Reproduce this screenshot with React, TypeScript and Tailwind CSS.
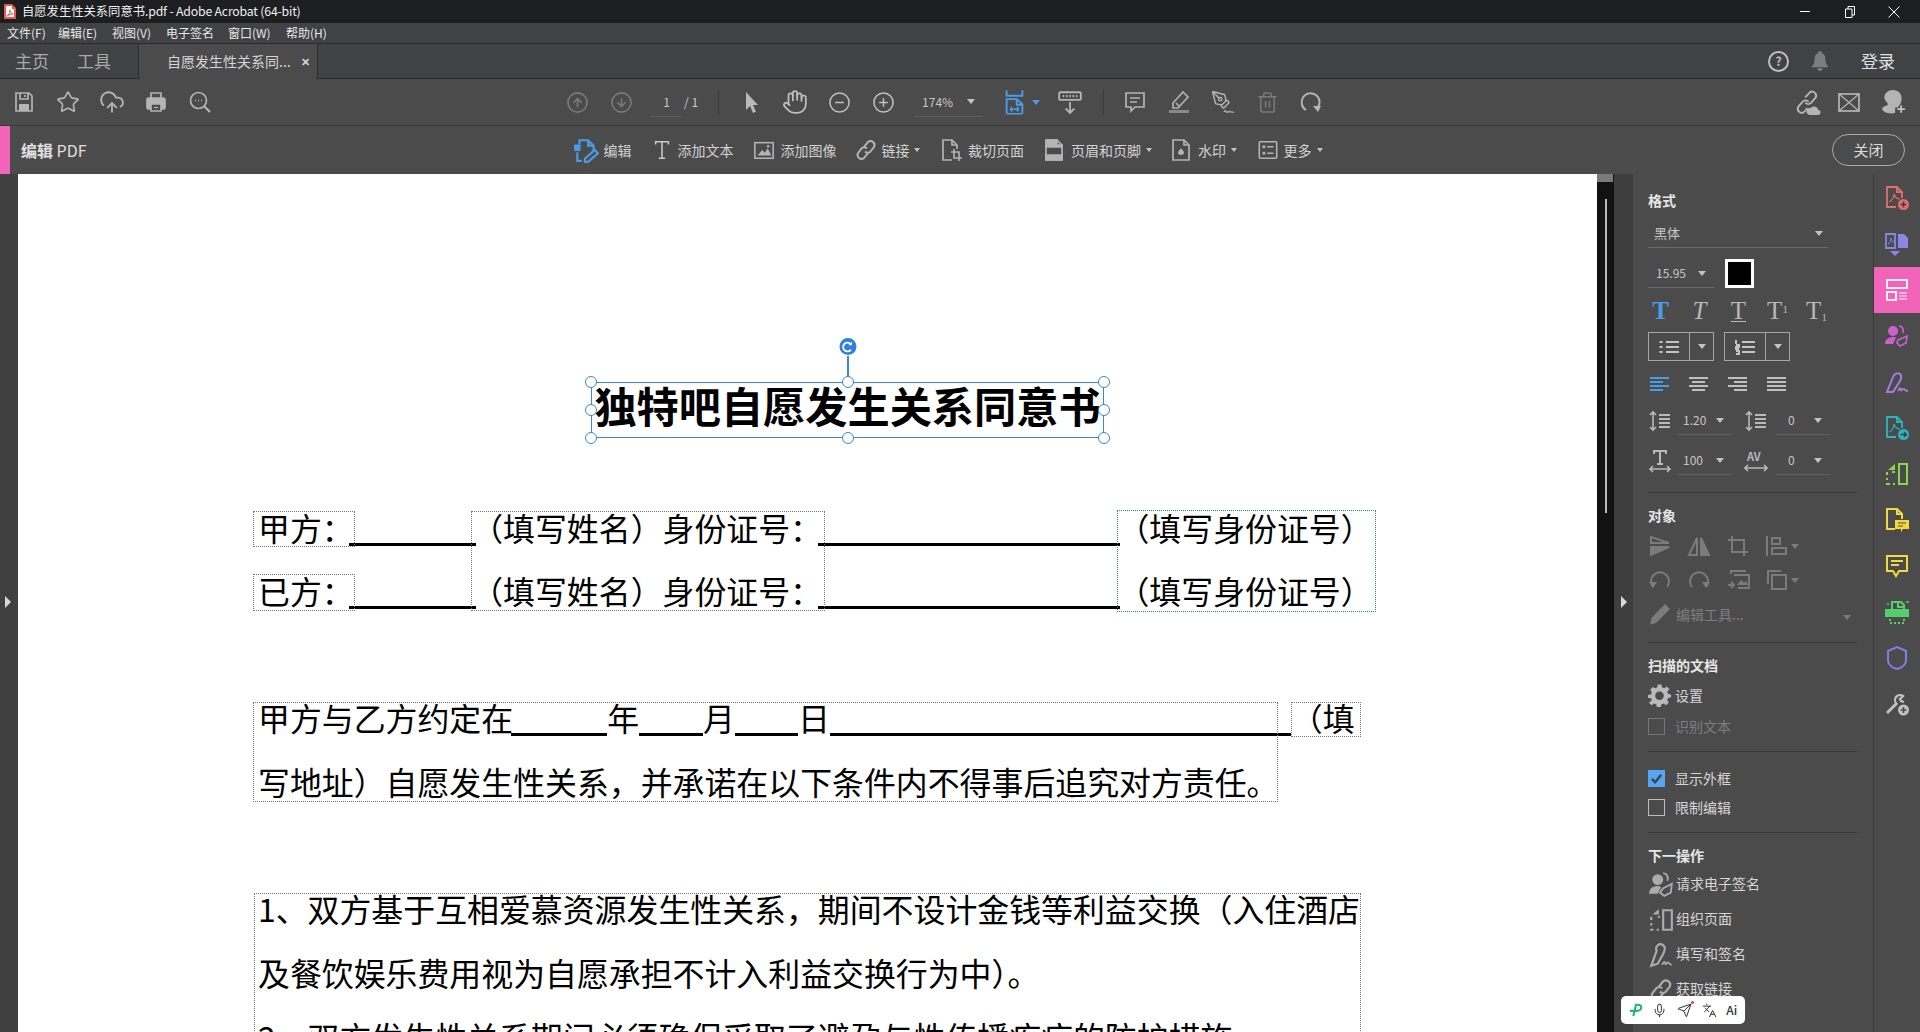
import type { ReactNode } from 'react'
import {
  CircleArrowDown,
  CircleArrowUp,
  CircleMinus,
  CirclePlus,
  CloudUpload,
  Hand,
  Languages,
  Mic,
  PenTool,
  Send,
  Star,
  Trash2,
} from 'lucide-react'

function Svg({
  size = 24,
  className = 'text-[#b4b4b4]',
  sw = 1.7,
  children,
}: {
  size?: number
  className?: string
  sw?: number
  children: ReactNode
}) {
  return (
    <svg viewBox="0 0 24 24" width={size} height={size} fill="none" stroke="currentColor" strokeWidth={sw} className={`shrink-0 ${className}`}>
      {children}
    </svg>
  )
}

function Caret({ className = 'border-t-[#c4c4c4]', big = false }: { className?: string; big?: boolean }) {
  return (
    <span
      className={`inline-block h-0 w-0 border-x-transparent border-b-0 ${big ? 'border-x-[4px] border-t-[5px]' : 'border-x-[3px] border-t-[4px]'} ${className}`}
    />
  )
}

/* toolbar drawings */
const SaveIcon = () => (
  <Svg>
    <path d="M4 3h13l3 3v15H4z" />
    <path d="M8 3v6h8V3M13 5v2" />
    <path d="M7 21v-7h10v7z" fill="currentColor" stroke="none" />
  </Svg>
)
const PrintIcon = () => (
  <Svg>
    <path d="M7 8V3h10v5" />
    <rect x="3" y="8" width="18" height="11" rx="2" fill="currentColor" />
    <path d="M7 14h10v7H7z" fill="#4b4b4b" />
    <path d="M10 17.500h4" strokeWidth={1.2} />
  </Svg>
)
const SearchDots = () => (
  <Svg>
    <circle cx="10.5" cy="10.5" r="8" />
    <path d="M16.5 16.5 22 22" strokeWidth={2.2} />
    <path d="M7 10.5h1M10 10.5h1M13 10.5h1" strokeWidth={1.6} />
  </Svg>
)
const CursorIcon = () => (
  <Svg className="text-[#b9b9b9]">
    <path d="M7 2v18l4-4 3 7 3-1.3-3-6.7h5z" fill="currentColor" stroke="none" />
  </Svg>
)
const FitIcon = () => (
  <Svg size={27} className="text-[#4c9be8]">
    <path d="M5 1v5h14V1" />
    <path d="M5 22V9h9l5 4.5V22" />
    <path d="M14 9v5h5" />
    <path d="M5 22h14M8 18h8M8 18l2-2M8 18l2 2M16 18l-2-2M16 18l-2 2" strokeWidth={1.2} />
  </Svg>
)
const RulerDown = () => (
  <Svg size={26}>
    <rect x="2" y="3" width="20" height="7" rx="1" />
    <path d="M6 5.5v2M9 5.5v2M12 5.5v2M15 5.5v2M18 5.5v2" strokeWidth={1.4} />
    <path d="M12 12v10M8 18l4 4 4-4" />
  </Svg>
)
const CommentIcon = () => (
  <Svg>
    <path d="M3 3h18v14h-9l-4 4v-4H3z" />
    <path d="M7 8h10M7 12h7" />
  </Svg>
)
const HighlightIcon = () => (
  <Svg className="text-[#b0b0b0]">
    <path d="M16 2l5 5-10 11H6v-5z" />
    <path d="M9 13l4 4" />
    <path d="M2 20h20v3H2z" fill="#8a8a8a" stroke="none" />
  </Svg>
)
const SignPen = () => (
  <span className="relative h-6 w-6">
    <PenTool size={20} strokeWidth={1.7} className="text-[#b4b4b4]" />
    <svg viewBox="0 0 12 8" width={12} height={8} fill="none" stroke="#b4b4b4" strokeWidth={1.2} className="absolute bottom-0 right-0">
      <path d="M1 6c2-4 2 2 4 0s2 1 3 0 2 1 3 0" />
    </svg>
  </span>
)
const RotateIcon = () => (
  <Svg>
    <path d="M7 20A9 9 0 1 1 18.5 18" strokeWidth={2} />
    <path d="M14 16h8l-3 6z" fill="currentColor" stroke="none" />
  </Svg>
)
const LinkCloud = () => (
  <Svg size={27}>
    <g transform="translate(-1 -1)">
      <path d="M11 8.5 15 4a3.6 3.6 0 0 1 5 5l-4 4.5a3.6 3.6 0 0 1-5-.5" strokeWidth={1.7} />
      <path d="M14 12.5a3.6 3.6 0 0 0-5-.5l-4 4.5a3.6 3.6 0 0 0 5 5l3-3.5" strokeWidth={1.7} />
    </g>
    <path d="M14 23a3 3 0 0 1 .5-6 4 4 0 0 1 7 1.5 2.3 2.3 0 0 1 .5 4.5z" fill="currentColor" stroke="none" />
  </Svg>
)
const MailIcon = () => (
  <Svg>
    <rect x="2" y="4" width="20" height="17" />
    <path d="M2 4l20 17M22 4 2 21" strokeWidth={1.2} />
  </Svg>
)
const UserPlus = () => (
  <Svg size={26}>
    <path d="M12 1c5 0 8 3.500 8 8 0 3-1.500 5.500-3 7v1h-3v5a9 9 0 0 1-3 .500C5 22.500 2 20 2 18.500c0-2 3.500-3 5-3.500v-2C5 11 4 9 4 8c0-4 3.500-7 8-7z" fill="currentColor" stroke="none" />
    <path d="M19.500 15v7M16 18.500h7" strokeWidth={1.6} stroke="#c4c4c4" />
  </Svg>
)

/* edit bar drawings */
const EditIcon = () => (
  <Svg size={26} className="text-[#4c9be8]" sw={2}>
    <path d="M6 7V3h8l5 5v4" />
    <path d="M14 3v5h5" />
    <rect x="1" y="7" width="6" height="6" rx="1" fill="currentColor" stroke="none" />
    <path d="M4 14v8h4" />
    <path d="M12 23l-1 0 0-3 9-8 3 3-9 8z" />
  </Svg>
)
const TextT = () => (
  <Svg size={22} sw={1.7} className="text-[#c8c8c8]">
    <path d="M5 6V3h14v3M12 3v18M8.500 21h7" />
  </Svg>
)
const ImageIcon = () => (
  <Svg size={22}>
    <rect x="2" y="4" width="20" height="17" />
    <path d="M5 18l5-6 3 3 3-5 4 8z" fill="currentColor" stroke="none" />
    <circle cx="16.500" cy="8" r="1.400" fill="currentColor" stroke="none" />
  </Svg>
)
const LinkIcon = ({ size = 24, className = 'text-[#b4b4b4]' }: { size?: number; className?: string }) => (
  <Svg size={size} className={className} sw={2}>
    <path d="M10 9l4-5a4 4 0 0 1 6 5l-4 5a4 4 0 0 1-5-.5" />
    <path d="M14 15l-4 5a4 4 0 0 1-6-5l4-5a4 4 0 0 1 5 .5" />
  </Svg>
)
const CropPage = () => (
  <Svg size={24}>
    <path d="M13 22H4V2h9l5 5v4" />
    <path d="M13 2v5h5" />
    <path d="M15 11v9h8M12 14h8v9" strokeWidth={1.6} />
  </Svg>
)
const HeaderPage = () => (
  <Svg size={24}>
    <path d="M4 2h11l5 5v15H4z" />
    <path d="M4 2h11v5h5v2H4zM4 17h16v5H4z" fill="currentColor" />
  </Svg>
)
const WaterPage = () => (
  <Svg size={24}>
    <path d="M4 2h11l5 5v15H4z" />
    <path d="M15 2v5h5" />
    <path d="M12 10l3 4a3 3 0 1 1-6 0z" fill="currentColor" stroke="none" />
  </Svg>
)
const MoreIcon = () => (
  <Svg size={22}>
    <rect x="2.500" y="3" width="19" height="18" rx="1" />
    <rect x="6" y="7" width="3" height="3" fill="currentColor" stroke="none" />
    <rect x="6" y="14" width="3" height="3" fill="currentColor" stroke="none" />
    <path d="M11 8.500h7M11 15.500h7" />
  </Svg>
)

/* side panel drawings */
const Bars = ({ d }: { d: string }) => (
  <svg viewBox="0 0 20 16" width={20} height={16} className="shrink-0" fill="none" stroke="currentColor" strokeWidth={2}>
    <path d={d} />
  </svg>
)
const SpacingIcon = () => (
  <svg viewBox="0 0 24 24" width={24} height={24} fill="none" stroke="#b9b9b9" strokeWidth={2} className="shrink-0">
    <path d="M5 3v18M2 6l3-3 3 3M2 18l3 3 3-3" strokeWidth={1.6} />
    <path d="M11 6h11M11 10h11M11 14h11M11 18h11" />
  </svg>
)
const WidthIcon = () => (
  <svg viewBox="0 0 24 24" width={24} height={24} fill="none" stroke="#b9b9b9" strokeWidth={2} className="shrink-0">
    <path d="M6 5V2h12v3M12 2v13M9 15h6" />
    <path d="M2 20h20M5 17l-3 3 3 3M19 17l3 3-3 3" strokeWidth={1.6} />
  </svg>
)
const DisabledIcon = ({ children }: { children: ReactNode }) => (
  <svg viewBox="0 0 24 24" width={24} height={24} fill="none" stroke="#7b7b7b" strokeWidth={2} className="shrink-0">
    {children}
  </svg>
)

const MiniSign = () => (
  <Svg size={26} className="text-[#ababab]" sw={2}>
    <path d="M3 22 8 8a4 4 0 0 1 6-5c3 2 1 6 0 8l-5 9z" />
    <path d="M13 21c2-4 3-3 3-1s2-2 3-1 1 2 3 2" strokeWidth={1.6} />
  </Svg>
)
const MiniOrganize = () => (
  <Svg size={26} className="text-[#ababab]" sw={2}>
    <path d="M14 3h8v18h-8z" />
    <path d="M3 9v3M3 15v2M3 20v1h2M8 21h2M9 9h2" />
    <path d="M10 2 4 7h6z" fill="currentColor" stroke="none" />
  </Svg>
)
const MiniUsers = () => (
  <Svg size={26} className="text-[#ababab]">
    <circle cx="9" cy="7" r="5" fill="currentColor" stroke="none" />
    <path d="M1 20c0-5 4-7 8-7 2 0 3 1 3 1l-3 6z" fill="currentColor" stroke="none" />
    <path d="M14 1c3 0 5 3 4 7" />
    <path d="M14 15l8-4-1 8-6 3-4-3z" />
  </Svg>
)

function Rule() {
  return <div className="h-px w-[209px] bg-[#3a3a3a]" />
}

function Heading({ children, className = '' }: { children: ReactNode; className?: string }) {
  return <div className={`h-5 text-[14px] leading-[18px] font-bold text-[#e6e6e6] ${className}`}>{children}</div>
}

function NextAction({ icon, label }: { icon: ReactNode; label: string }) {
  return (
    <div className="flex h-[35px] items-center gap-[3px] text-[14px] text-[#d6d6d6]">
      {icon}
      <span className="-mt-[2px] -ml-[1px]">{label}</span>
    </div>
  )
}

function Panel() {
  return (
    <aside className="h-[858px] w-[240px] shrink-0 overflow-hidden bg-[#4b4b4b] pl-[15px]">
      <Heading className="mt-[17px]">格式</Heading>
      <div className="mt-[8px] flex h-[29px] w-[180px] items-center justify-between border-b border-[#6a6a6a] pl-[6px] pr-[5px] text-[13px] text-[#c8c8c8]">
        <span>黑体</span>
        <Caret big />
      </div>
      <div className="mt-[11px] flex h-[29px] items-center">
        <div className="flex h-[29px] w-[66px] items-center justify-between border-b border-[#6a6a6a] pl-2 pr-2 text-[12px] text-[#c8c8c8]">
          <span>15.95</span>
          <Caret big />
        </div>
        <div className="ml-[11px] h-[29px] w-[29px] border-[3px] border-white bg-black" />
      </div>
      <div className="-ml-[7px] mt-[8px] flex h-[28px] w-[196px] items-center font-['Liberation_Serif',serif] text-[25px] leading-none text-[#b8b8b8]">
        <span className="w-[39px] text-center font-bold text-[#4c9be8]">T</span>
        <span className="w-[39px] text-center italic">T</span>
        <span className="w-[39px] text-center underline decoration-1 underline-offset-2">T</span>
        <span className="w-[39px] text-center">
          T<sup className="text-[11px]">1</sup>
        </span>
        <span className="w-[39px] text-center">
          T<sub className="text-[11px]">1</sub>
        </span>
      </div>
      <div className="mt-[8px] flex h-[29px] gap-[10px] text-[#c4c4c4]">
        <div className="flex w-[66px] border border-[#a5a5a5]">
          <div className="flex w-[41px] items-center justify-center border-r border-[#a5a5a5]">
            <Bars d="M7 3h13M7 8h13M7 13h13M0.500 3h3M0.500 8h3M0.500 13h3" />
          </div>
          <div className="flex flex-1 items-center justify-center">
            <Caret big />
          </div>
        </div>
        <div className="flex w-[66px] border border-[#a5a5a5]">
          <div className="flex w-[41px] items-center justify-center border-r border-[#a5a5a5]">
            <Bars d="M7 3h13M7 8h13M7 13h13M1 1v4M1 6h3v2H1v2h3M1 12h3v3H1" />
          </div>
          <div className="flex flex-1 items-center justify-center">
            <Caret big />
          </div>
        </div>
      </div>
      <div className="mt-[11px] flex h-[24px] items-center text-[#c0c0c0]">
        <span className="flex w-[39px] justify-start pl-[2px] text-[#4c9be8]">
          <Bars d="M0 2h19M0 6h13M0 10h19M0 14h13" />
        </span>
        <span className="flex w-[39px] justify-start pl-[2px]">
          <Bars d="M0 2h19M3 6h13M0 10h19M3 14h13" />
        </span>
        <span className="flex w-[39px] justify-start pl-[2px]">
          <Bars d="M0 2h19M6 6h13M0 10h19M6 14h13" />
        </span>
        <span className="flex w-[39px] justify-start pl-[2px]">
          <Bars d="M0 2h19M0 6h19M0 10h19M0 14h19" />
        </span>
      </div>
      <div className="mt-[10px] flex h-[29px] items-center text-[13px] text-[#c8c8c8]">
        <SpacingIcon />
        <div className="ml-[6px] flex h-[29px] w-[54px] items-center justify-between border-b border-[#5f5f5f] px-[5px] pr-2 text-[12px]">
          <span>1.20</span>
          <Caret big />
        </div>
        <span className="ml-[12px]">
          <SpacingIcon />
        </span>
        <div className="ml-[8px] flex h-[29px] w-[54px] items-center justify-between border-b border-[#5f5f5f] pl-[12px] pr-2 text-[12px]">
          <span>0</span>
          <Caret big />
        </div>
      </div>
      <div className="mt-[11px] flex h-[29px] items-center text-[13px] text-[#c8c8c8]">
        <WidthIcon />
        <div className="ml-[6px] flex h-[29px] w-[54px] items-center justify-between border-b border-[#5f5f5f] px-[5px] pr-2 text-[12px]">
          <span>100</span>
          <Caret big />
        </div>
        <span className="relative ml-[12px] h-6 w-6">
          <span className="absolute left-[3px] top-[1px] text-[11px] leading-3 font-bold text-[#b9b9b9]">AV</span>
          <svg viewBox="0 0 24 8" width={24} height={8} fill="none" stroke="#b9b9b9" strokeWidth={1.6} className="absolute bottom-[1px] left-0">
            <path d="M1 4h22M4 1 1 4l3 3M20 1l3 3-3 3" />
          </svg>
        </span>
        <div className="ml-[8px] flex h-[29px] w-[54px] items-center justify-between border-b border-[#5f5f5f] pl-[12px] pr-2 text-[12px]">
          <span>0</span>
          <Caret big />
        </div>
      </div>

      <div className="mt-[17px]">
        <Rule />
      </div>
      <Heading className="mt-[13px]">对象</Heading>
      <div className="mt-[6px] flex h-[28px] items-center">
        <span className="flex w-[39px]">
          <DisabledIcon>
            <path d="M3 3l18 6H3z" />
            <path d="M3 13h18L3 21z" fill="#7b7b7b" />
          </DisabledIcon>
        </span>
        <span className="flex w-[39px]">
          <DisabledIcon>
            <path d="M10 4 2 21h8z" />
            <path d="M14 4l8 17h-8z" fill="#7b7b7b" />
          </DisabledIcon>
        </span>
        <span className="flex w-[39px]">
          <DisabledIcon>
            <path d="M6 2v16h16M2 6h16v16" />
          </DisabledIcon>
        </span>
        <span className="flex w-[39px] items-center gap-[2px]">
          <DisabledIcon>
            <path d="M2 2v20M7 4h8v6H7zM7 14h14v6H7z" />
          </DisabledIcon>
          <Caret className="border-t-[#7b7b7b]" big />
        </span>
      </div>
      <div className="mt-[6px] flex h-[28px] items-center">
        <span className="flex w-[39px]">
          <DisabledIcon>
            <path d="M5 19A9 9 0 1 1 19 19" />
            <path d="M1 14h8l-4 6z" fill="#7b7b7b" stroke="none" />
          </DisabledIcon>
        </span>
        <span className="flex w-[39px]">
          <DisabledIcon>
            <path d="M5 19A9 9 0 1 1 19 19" />
            <path d="M15 14h8l-4 6z" fill="#7b7b7b" stroke="none" />
          </DisabledIcon>
        </span>
        <span className="flex w-[39px]">
          <DisabledIcon>
            <path d="M5 6V3h15M8 7h15v13H12" />
            <path d="M11 17l4-5 3 3 2-2 2 4z" fill="#7b7b7b" stroke="none" />
            <path d="M2 17h6M5 14l3 3-3 3" />
          </DisabledIcon>
        </span>
        <span className="flex w-[39px] items-center gap-[2px]">
          <DisabledIcon>
            <path d="M3 16V3h13" />
            <rect x="7" y="7" width="14" height="14" />
          </DisabledIcon>
          <Caret className="border-t-[#7b7b7b]" big />
        </span>
      </div>
      <div className="mt-[8px] flex h-[24px] w-[203px] items-center text-[14px] text-[#7e7e7e]">
        <svg viewBox="0 0 24 24" width={24} height={24} fill="#7b7b7b" className="shrink-0">
          <path d="M17 2l5 5L8 21l-6 1.500L3.500 16z" />
        </svg>
        <span className="ml-[4px]">编辑工具...</span>
        <span className="ml-auto">
          <Caret className="border-t-[#7b7b7b]" big />
        </span>
      </div>

      <div className="mt-[16px]">
        <Rule />
      </div>
      <Heading className="mt-[13px]">扫描的文档</Heading>
      <div className="mt-[7px] flex h-[24px] items-center gap-[4px] text-[14px] text-[#d6d6d6]">
        <svg viewBox="0 0 24 24" width={23} height={23} fill="#b9b9b9" className="shrink-0">
          <path fillRule="evenodd" d="M10 1h4l.6 3 2.400 1 2.600-1.700 2.800 2.800L20 8.700l1 2.400 3 .6v3l-3 .6-1 2.400 1.700 2.600-2.800 2.800-2.600-1.700-2.400 1-.6 3h-4l-.6-3-2.400-1-2.600 1.700-2.800-2.800L4 18.200l-1-2.400-3-.6v-3l3-.6 1-2.400-1.700-2.600 2.800-2.800L7.700 5l2-1zM12 8.500a4.500 4.500 0 1 0 0 9 4.500 4.500 0 0 0 0-9z" transform="translate(0 -.5) scale(1 .98)" />
        </svg>
        <span>设置</span>
      </div>
      <div className="mt-[8px] flex h-[22px] items-center gap-[10px] text-[14px] text-[#7e7e7e]">
        <span className="h-[17px] w-[17px] border border-[#777]" />
        <span>识别文本</span>
      </div>
      <div className="mt-[14px]">
        <Rule />
      </div>
      <div className="mt-[16px] flex h-[20px] items-center gap-[10px] text-[14px] text-[#d6d6d6]">
        <span className="flex h-[17px] w-[17px] items-center justify-center bg-[#56a5f0]">
          <svg viewBox="0 0 16 16" width={15} height={15} fill="none" stroke="#3c4650" strokeWidth={2.6}>
            <path d="M3 8.500 6.500 12 13 4" />
          </svg>
        </span>
        <span>显示外框</span>
      </div>
      <div className="mt-[9px] flex h-[20px] items-center gap-[10px] text-[14px] text-[#d6d6d6]">
        <span className="h-[17px] w-[17px] border border-[#bdbdbd]" />
        <span>限制编辑</span>
      </div>
      <div className="mt-[15px]">
        <Rule />
      </div>
      <Heading className="mt-[13px]">下一操作</Heading>
      <div className="mt-[1px]">
        <NextAction icon={<MiniUsers />} label="请求电子签名" />
        <NextAction icon={<MiniOrganize />} label="组织页面" />
        <NextAction icon={<MiniSign />} label="填写和签名" />
        <NextAction icon={<LinkIcon size={26} className="text-[#ababab]" />} label="获取链接" />
      </div>
    </aside>
  )
}

function RailDoc({ color, badge }: { color: string; badge: ReactNode }) {
  return (
    <svg viewBox="0 0 26 26" width={26} height={26} fill="none" stroke={color} strokeWidth={1.8}>
      <path d="M12 22H3V2h10l5 5v6" />
      <path d="M13 2v5h5" />
      <path d="M5 17c3-1 5-5 5-8 1 3 2 5 6 5" strokeWidth={1.1} />
      {badge}
    </svg>
  )
}

function RightRail() {
  const slot = 'flex h-[46px] items-center justify-center'
  return (
    <nav className="flex w-[47px] shrink-0 flex-col border-l border-[#3a3a3a] bg-[#4b4b4b] pt-[1px]">
      <div className={slot}>
        <RailDoc
          color="#e46f6f"
          badge={
            <>
              <circle cx="19.500" cy="19.500" r="5.500" fill="#e46f6f" stroke="none" />
              <path d="M19.500 16.500v6M16.500 19.500h6" stroke="#3f3f3f" strokeWidth={1.6} />
            </>
          }
        />
      </div>
      <div className={slot}>
        <svg viewBox="0 0 26 26" width={26} height={26} fill="none" stroke="#8a86e6" strokeWidth={1.8}>
          <path d="M11 3H2v14h9z" />
          <path d="M14 3h6l4 4v10H14z" fill="#8a86e6" stroke="none" />
          <path d="M9 16v5M13 15v6M6 20h10l-5 5z" fill="#8a86e6" stroke="none" />
          <path d="M4 13c2-1 3-3 3-6 0 2 1 4 3 4" strokeWidth={1} />
        </svg>
      </div>
      <div className={`${slot} bg-[#f264b9]`}>
        <svg viewBox="0 0 26 26" width={26} height={26} fill="none" stroke="#fff" strokeWidth={1.8}>
          <rect x="3" y="3" width="20" height="8" />
          <rect x="3" y="15" width="9" height="8" />
          <path d="M15 16h8M15 19h8M15 22h8" strokeWidth={1.2} />
        </svg>
      </div>
      <div className={slot}>
        <svg viewBox="0 0 26 26" width={26} height={26} fill="#cf5fd0" stroke="#cf5fd0" strokeWidth={1.6}>
          <circle cx="9" cy="8" r="5" stroke="none" />
          <path d="M1 21c0-5 4-7 8-7 2 0 3 .500 3 .500L9 21z" stroke="none" />
          <path d="M15 3c3 0 5 3 4 7" fill="none" />
          <path d="M14 17l9-4-1 7-6 3-3-3z" fill="none" />
        </svg>
      </div>
      <div className={slot}>
        <svg viewBox="0 0 26 26" width={26} height={26} fill="none" stroke="#a67be0" strokeWidth={2}>
          <path d="M3 23 9 8c1-3 5-5 7-3s1 5 0 7l-7 11z" />
          <path d="M14 22c2-4 3-3 3-1s2-2 3-1 2 2 4 2" strokeWidth={1.8} />
        </svg>
      </div>
      <div className={slot}>
        <RailDoc
          color="#2fb4bf"
          badge={
            <>
              <circle cx="19.500" cy="19.500" r="5.500" fill="#2fb4bf" stroke="none" />
              <path d="M16.500 19.500h6M20 17l2.500 2.500L20 22" stroke="#3f3f3f" strokeWidth={1.4} />
            </>
          }
        />
      </div>
      <div className={slot}>
        <svg viewBox="0 0 26 26" width={26} height={26} fill="none" stroke="#8fd450" strokeWidth={2}>
          <path d="M15 3h8v20h-8z" />
          <path d="M3 11v3M3 17v2M3 22v1h3M9 23h2M8 11h3" />
          <path d="M11 3 4 9h7z" fill="#8fd450" stroke="none" />
        </svg>
      </div>
      <div className={slot}>
        <svg viewBox="0 0 26 26" width={26} height={26} fill="none" stroke="#f2da3e" strokeWidth={2}>
          <path d="M11 22H3V2h10l5 5v5" />
          <path d="M13 2v5h5" />
          <path d="M11 13h14v9h-6l-2 3v-3h-6z" fill="#f2da3e" stroke="none" />
          <path d="M14 16h8M14 19h5" stroke="#4b4b4b" strokeWidth={1.2} />
        </svg>
      </div>
      <div className={slot}>
        <svg viewBox="0 0 26 26" width={26} height={26} fill="none" stroke="#f2da3e" strokeWidth={2}>
          <path d="M3 3h20v15h-8l-3 5-3-5H3z" />
          <path d="M7 8h12M7 12h8" />
        </svg>
      </div>
      <div className={slot}>
        <svg viewBox="0 0 26 26" width={26} height={26} fill="none" stroke="#55cf6e" strokeWidth={2}>
          <path d="M8 11V3h9l3 3v5" />
          <path d="M14 3v5h5" />
          <path d="M2 11h22v6H2z" fill="#55cf6e" />
          <path d="M6 20v4h14v-4" strokeDasharray="2 2" />
          <path d="M3 5h2M22 3h3" strokeWidth={1.4} />
        </svg>
      </div>
      <div className={slot}>
        <svg viewBox="0 0 26 26" width={26} height={26} fill="none" stroke="#807ee6" strokeWidth={2}>
          <path d="M13 2 22 6v9c0 5-5 8-9 9-4-1-9-4-9-9V6z" />
        </svg>
      </div>
      <div className={slot}>
        <svg viewBox="0 0 26 26" width={26} height={26} fill="none" stroke="#c2c2c2" strokeWidth={3}>
          <path d="M3 22 13 12" />
          <path d="M13 13a5 5 0 0 1 6-8l-3 3 1 2 3 1" strokeWidth={2.200} />
          <circle cx="19.500" cy="19" r="5.500" fill="#c2c2c2" stroke="none" />
          <path d="M19.500 16v6M16.500 19h6" stroke="#4b4b4b" strokeWidth={1.6} />
        </svg>
      </div>
    </nav>
  )
}

function Blank({ w, ml = 0, mr = 0 }: { w: number; ml?: number; mr?: number }) {
  return <span className="inline-block h-[3px] bg-black align-[-5px]" style={{ width: w, marginLeft: ml, marginRight: mr }} />
}

function Frame({ x, y, w, h, blue = false }: { x: number; y: number; w: number; h: number; blue?: boolean }) {
  return (
    <div
      className={`pointer-events-none absolute border border-dotted ${blue ? 'border-[#2f80b5]' : 'border-[#777777]'}`}
      style={{ left: x - 18, top: y - 174, width: w, height: h }}
    />
  )
}

function Handle({ left, top }: { left: string; top: string }) {
  return <span className={`absolute h-[12px] w-[12px] rounded-full border-[1.5px] border-[#3b86d8] bg-white ${left} ${top}`} />
}

function Line({ children, className = '' }: { children: ReactNode; className?: string }) {
  return <div className={`h-[64px] whitespace-nowrap leading-[64px] ${className}`}>{children}</div>
}

function Page() {
  return (
    <main className="relative h-[858px] w-[1579px] shrink-0 overflow-hidden bg-white text-[31.9px] text-black">
      <div className="relative ml-[573px] mt-[208px] h-[56px] w-[513px] border border-[#3b86d8] text-center text-[42.2px] leading-[44px] font-bold whitespace-nowrap">
        独特吧自愿发生关系同意书
        <span className="absolute left-1/2 top-[-27px] h-[27px] w-[2px] -translate-x-1/2 bg-[#3b86d8]" />
        <span className="absolute left-1/2 top-[-45px] flex h-[17px] w-[17px] -translate-x-1/2 items-center justify-center rounded-full bg-[#2f80e0]">
          <svg viewBox="0 0 16 16" width={14} height={14} fill="none" stroke="#fff" strokeWidth={2}>
            <path d="M12 11a5 5 0 1 1 0-6" />
            <path d="M13 2v4H9" fill="#fff" stroke="none" />
          </svg>
        </span>
        <Handle left="left-[-7px]" top="top-[-7px]" />
        <Handle left="left-[250px]" top="top-[-7px]" />
        <Handle left="right-[-7px]" top="top-[-7px]" />
        <Handle left="left-[-7px]" top="top-[21px]" />
        <Handle left="right-[-7px]" top="top-[21px]" />
        <Handle left="left-[-7px]" top="bottom-[-7px]" />
        <Handle left="left-[250px]" top="bottom-[-7px]" />
        <Handle left="right-[-7px]" top="bottom-[-7px]" />
      </div>

      <div className="ml-[240px] mt-[56.5px]">
        <Line>
          甲方：<Blank w={127} ml={-4.5} mr={-5} />（填写姓名）身份证号：<Blank w={302} ml={-3.5} mr={-3} />（填写身份证号）
        </Line>
        <Line className="-mt-[0.5px]">
          已方：<Blank w={127} ml={-4.5} mr={-5} />（填写姓名）身份证号：<Blank w={302} ml={-3.5} mr={-3} />（填写身份证号）
        </Line>
        <Line className="mt-[63px]">
          甲方与乙方约定在<Blank w={96} ml={-2} />年<Blank w={64} />月<Blank w={63} />日<Blank w={461} />（填
        </Line>
        <Line>写地址）自愿发生性关系，并承诺在以下条件内不得事后追究对方责任。</Line>
        <Line className="mt-[63px]">1、双方基于互相爱慕资源发生性关系，期间不设计金钱等利益交换（入住酒店</Line>
        <Line>及餐饮娱乐费用视为自愿承担不计入利益交换行为中）。</Line>
        <Line>2、双方发生性关系期间必须确保采取了避孕与性传播疾病的防护措施。</Line>
      </div>

      <Frame x={253} y={511} w={102} h={36} />
      <Frame x={253} y={574} w={102} h={37} />
      <Frame x={471} y={511} w={354} h={100} />
      <Frame x={1117} y={510} w={259} h={102} blue />
      <Frame x={253} y={702} w={1025} h={100} />
      <Frame x={1291} y={702} w={70} h={35} />
      <Frame x={254} y={893} w={1107} h={200} />
    </main>
  )
}

const toolBtn = 'flex h-full w-[44px] shrink-0 items-center justify-center'
const editBtn = 'flex h-full shrink-0 items-center text-[14px] text-[#d2d2d2]'

export default function App() {
  return (
    <div className="relative flex h-[1032px] w-[1920px] flex-col overflow-hidden bg-[#3e3e3e] font-['Noto_Sans_CJK_SC',sans-serif]">
      {/* title bar */}
      <header className="flex h-[23px] shrink-0 items-center bg-[#1d1e20] pl-[4px] text-white">
        <svg viewBox="0 0 12 15" width={12} height={15} className="shrink-0">
          <path d="M0 0h8l4 4v11H0z" fill="#e8564d" />
          <path d="M2 2h6v3h2v8H2z" fill="#fff" />
          <path d="M3 12c2-1 3-3 3-6 0 2 1 3 3 4-2 0-4 1-6 2z" fill="none" stroke="#e8564d" strokeWidth={1} />
        </svg>
        <span className="ml-[6px] text-[12.3px] leading-none text-[#f0f0f0]">
          自愿发生性关系同意书<span className="tracking-[-0.2px]">.pdf - Adobe Acrobat (64-bit)</span>
        </span>
        <div className="ml-auto flex h-full items-center pr-[3px]">
          <span className="flex w-[45px] justify-center">
            <span className="h-px w-[10px] bg-white" />
          </span>
          <span className="flex w-[45px] justify-center">
            <svg viewBox="0 0 10 12" width={10} height={12} fill="none" stroke="#fff" strokeWidth={1}>
              <path d="M.5 3h6.500v8.500H.500zM3 3V.5h6.500V9H7" />
            </svg>
          </span>
          <span className="flex w-[45px] justify-center pr-[2px]">
            <svg viewBox="0 0 12 12" width={12} height={12} fill="none" stroke="#fff" strokeWidth={1}>
              <path d="M.5.5l11 11M11.500.5l-11 11" />
            </svg>
          </span>
        </div>
      </header>

      {/* menu */}
      <nav className="flex h-[21px] shrink-0 items-center border-b border-[#2c2c2c] bg-[#414243] pl-[7px] text-[12px] text-[#e8e8e8]">
        <span className="w-[51px]">文件(F)</span>
        <span className="w-[54px]">编辑(E)</span>
        <span className="w-[54px]">视图(V)</span>
        <span className="w-[62px]">电子签名</span>
        <span className="w-[58px]">窗口(W)</span>
        <span>帮助(H)</span>
      </nav>

      {/* tabs */}
      <div className="flex h-[35px] shrink-0 items-stretch border-b border-[#2c2c2c] bg-[#414243]">
        <span className="flex items-center pl-[15px] text-[17px] text-[#a9a9a9]">主页</span>
        <span className="flex items-center pl-[28px] text-[17px] text-[#a9a9a9]">工具</span>
        <div className="relative -mb-px ml-[27px] flex w-[180px] items-center border-x border-[#2c2c2c] bg-[#4b4b4b] pl-[28px] text-[14px] text-[#d6d6d6]">
          <span>自愿发生性关系同...</span>
          <span className="ml-auto mr-[7px] text-[11px] font-bold">✕</span>
        </div>
        <div className="ml-auto flex items-center pr-[25px]">
          <span className="relative flex h-[21px] w-[21px] items-center justify-center rounded-full border-2 border-[#c0c0c0] text-[12px] font-bold text-[#c0c0c0]">?</span>
          <span className="ml-[22px] w-[20px]">
            <svg viewBox="0 0 20 24" width={18} height={22} fill="#7d7d7d">
              <path d="M10 1c1 0 2 1 2 2 3 1 4 4 4 7 0 4 1 6 3 8v1H1v-1c2-2 3-4 3-8 0-3 1-6 4-7 0-1 1-2 2-2zM7 20h6c0 2-1 3-3 3s-3-1-3-3z" />
            </svg>
          </span>
          <span className="ml-[30px] text-[17px] text-[#e0e0e0]">登录</span>
        </div>
      </div>

      {/* quick tools */}
      <div className="flex h-[47px] shrink-0 items-center border-b border-[#3a3a3a] bg-[#4b4b4b] pl-[2px] text-[#b4b4b4]">
        <span className={toolBtn}><SaveIcon /></span>
        <span className={toolBtn}><Star size={24} strokeWidth={1.7} /></span>
        <span className={toolBtn}><CloudUpload size={26} strokeWidth={1.7} /></span>
        <span className={toolBtn}><PrintIcon /></span>
        <span className={toolBtn}><SearchDots /></span>
        <span className={`${toolBtn} ml-[333px] text-[#7a7a7a]`}><CircleArrowUp size={23} strokeWidth={1.7} /></span>
        <span className={`${toolBtn} text-[#7a7a7a]`}><CircleArrowDown size={23} strokeWidth={1.7} /></span>
        <div className="ml-[8px] flex h-[29px] w-[31px] items-center justify-center border-b border-[#5f5f5f] text-[12px] text-[#c8c8c8]">1</div>
        <span className="ml-[2px] text-[12px] text-[#c8c8c8]">/ 1</span>
        <span className="ml-[20px] h-[26px] w-px bg-[#3a3a3a]" />
        <span className={`${toolBtn} ml-[10px]`}><CursorIcon /></span>
        <span className={toolBtn}><Hand size={26} strokeWidth={1.6} className="text-[#c0c0c0]" /></span>
        <span className={toolBtn}><CircleMinus size={23} strokeWidth={1.6} className="text-[#c0c0c0]" /></span>
        <span className={toolBtn}><CirclePlus size={23} strokeWidth={1.6} className="text-[#c0c0c0]" /></span>
        <div className="ml-[10px] flex h-[29px] w-[68px] items-center justify-between border-b border-[#5f5f5f] pl-[7px] pr-[8px] text-[12px] text-[#c8c8c8]">
          <span>174%</span>
          <Caret big />
        </div>
        <span className="ml-[18px] flex items-center gap-[4px]">
          <FitIcon />
          <Caret className="border-t-[#4c9be8]" big />
        </span>
        <span className={`${toolBtn} ml-[8px]`}><RulerDown /></span>
        <span className="ml-[11px] h-[26px] w-px bg-[#3a3a3a]" />
        <span className={`${toolBtn} ml-[9px]`}><CommentIcon /></span>
        <span className={toolBtn}><HighlightIcon /></span>
        <span className={toolBtn}><SignPen /></span>
        <span className={`${toolBtn} text-[#7a7a7a]`}><Trash2 size={23} strokeWidth={1.6} /></span>
        <span className={toolBtn}><RotateIcon /></span>
        <div className="ml-auto flex h-full items-center pr-[5px]">
          <span className={`${toolBtn} -mr-[2px]`}><LinkCloud /></span>
          <span className={toolBtn}><MailIcon /></span>
          <span className={toolBtn}><UserPlus /></span>
        </div>
      </div>

      {/* edit pdf tools */}
      <div className="flex h-[48px] shrink-0 items-center bg-[#4b4b4b]">
        <span className="h-full w-[10px] bg-[#f264b9]" />
        <span className="ml-[11px] text-[16px] text-[#e0e0e0]">
          <b>编辑</b> PDF
        </span>
        <span className={`${editBtn} ml-[486px] gap-[5px] text-[#55a3ee]`}>
          <EditIcon />
          编辑
        </span>
        <span className={`${editBtn} ml-[19px] gap-[5px]`}>
          <TextT />
          添加文本
        </span>
        <span className={`${editBtn} ml-[19px] gap-[6px]`}>
          <ImageIcon />
          添加图像
        </span>
        <span className={`${editBtn} ml-[17px] gap-[4px]`}>
          <LinkIcon />
          链接
          <Caret />
        </span>
        <span className={`${editBtn} ml-[19.5px] gap-[5px]`}>
          <CropPage />
          裁切页面
        </span>
        <span className={`${editBtn} ml-[18px] gap-[5px]`}>
          <HeaderPage />
          页眉和页脚
          <Caret />
        </span>
        <span className={`${editBtn} ml-[17px] gap-[5px]`}>
          <WaterPage />
          水印
          <Caret />
        </span>
        <span className={`${editBtn} ml-[19.5px] gap-[5px]`}>
          <MoreIcon />
          更多
          <Caret />
        </span>
        <button className="ml-auto mr-[15px] h-[32px] w-[73px] rounded-full border-[1.5px] border-[#a9a9a9] text-[15px] text-[#dcdcdc]">关闭</button>
      </div>

      {/* workspace */}
      <div className="relative flex min-h-0 flex-1">
        <div className="relative w-[18px] shrink-0 bg-[#404040]">
          <span className="absolute left-[5px] top-[422px] h-0 w-0 border-y-[6px] border-l-[6px] border-y-transparent border-l-[#d8d8d8]" />
        </div>
        <Page />
        <div className="relative w-[17px] shrink-0 bg-[#121212]">
          <span className="absolute left-0 top-0 h-[8px] w-[16px] bg-[#7a7a7a]" />
          <span className="absolute left-[8px] top-[25px] h-[314px] w-[2px] bg-[#b8b8b8]" />
        </div>
        <div className="relative w-[19px] shrink-0 bg-[#3e3e3e]">
          <span className="absolute left-[7px] top-[422px] h-0 w-0 border-y-[6px] border-l-[6px] border-y-transparent border-l-[#d8d8d8]" />
        </div>
        <Panel />
        <RightRail />
      </div>

      {/* input method floating bar */}
      <div className="absolute left-[1621px] top-[996px] flex h-[28px] w-[124px] items-center justify-around rounded-[5px] bg-white px-[3px] text-[#333]">
        <svg viewBox="0 0 16 16" width={14} height={14} fill="none" stroke="#22b573" strokeWidth={2.4}>
          <path d="M1 9h8c3 0 5-2 5-4s-2-3-4-3H8L5 15" />
        </svg>
        <Mic size={15} strokeWidth={1.6} />
        <span className="relative">
          <Send size={15} strokeWidth={1.6} />
          <span className="absolute -right-[2px] -top-[2px] h-[3px] w-[3px] rounded-full bg-[#e33]" />
        </span>
        <Languages size={15} strokeWidth={1.6} />
        <span className="text-[12px] font-medium">Ai</span>
      </div>
    </div>
  )
}
